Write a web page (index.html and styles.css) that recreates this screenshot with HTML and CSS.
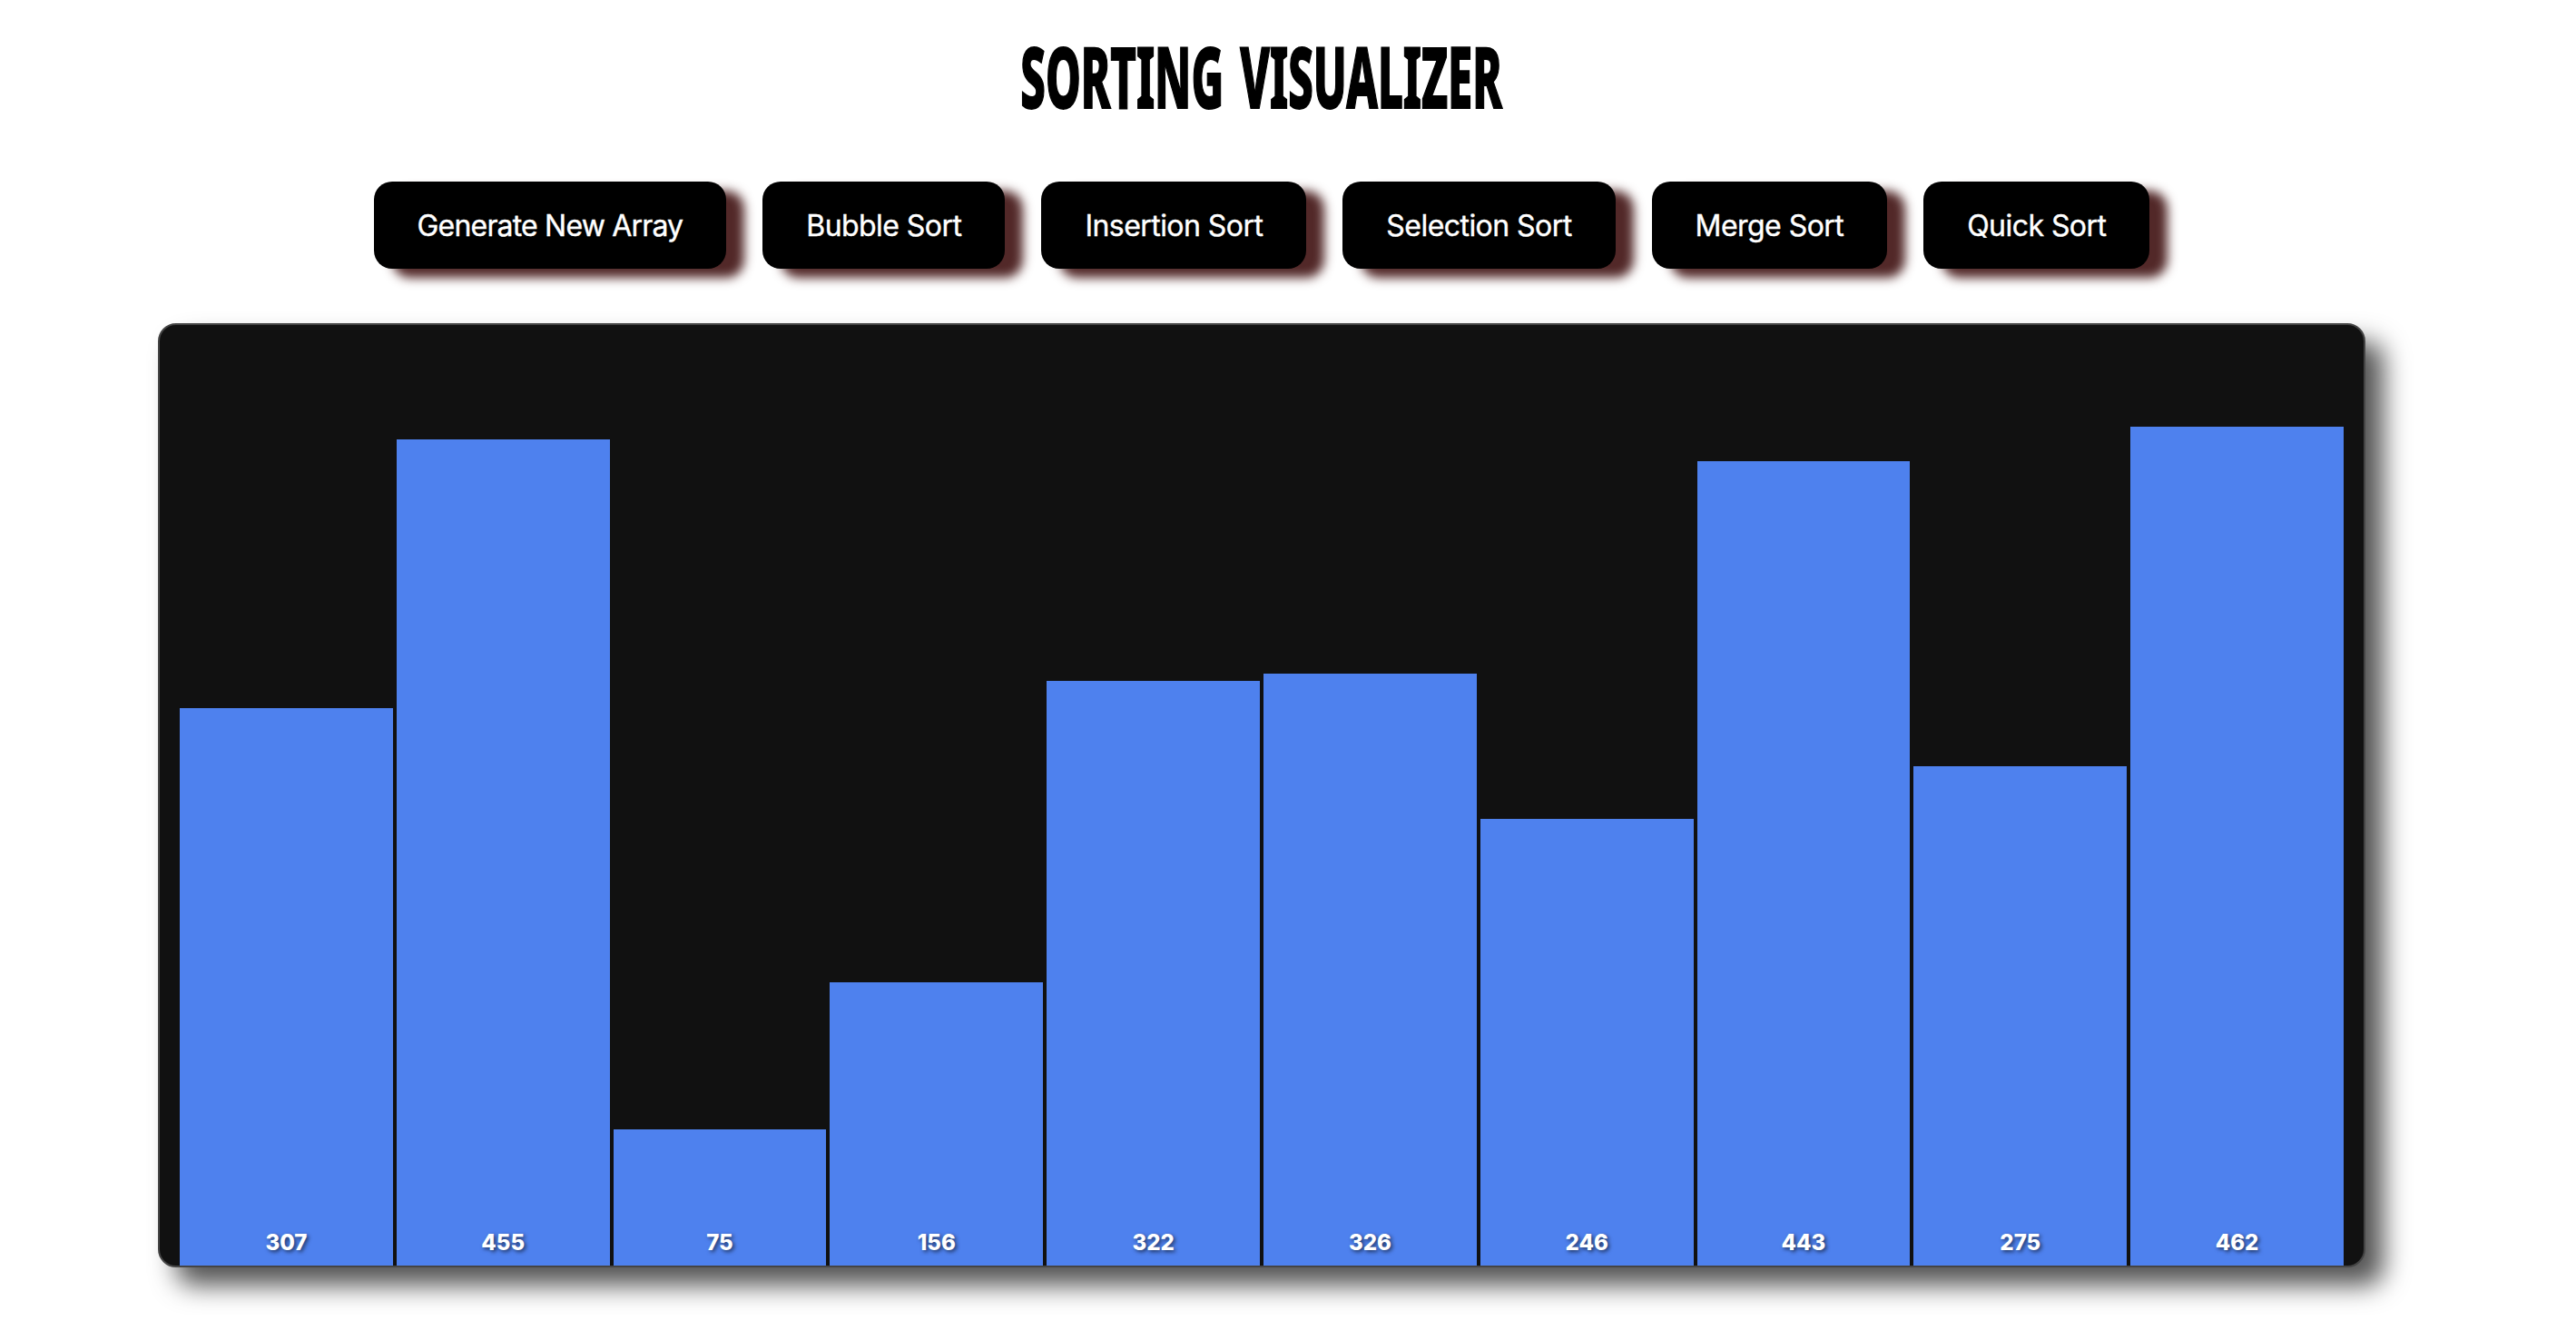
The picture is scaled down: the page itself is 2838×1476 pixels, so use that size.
FILE: index.html
```html
<!DOCTYPE html>
<html lang="en">
<head>
    <meta charset="UTF-8">
    <meta name="viewport" content="width=device-width, initial-scale=1.0">
    <title>Sorting Visualizer</title>
    <link rel="stylesheet" href="styles.css">
</head>
<body>
    <h1 class="title"><span class="title-text">SORTING VISUALIZER</span></h1>

    <div class="controls">
        <button class="btn btn-generate" id="generate">Generate New Array</button>
        <button class="btn" id="bubble">Bubble Sort</button>
        <button class="btn" id="insertion">Insertion Sort</button>
        <button class="btn" id="selection">Selection Sort</button>
        <button class="btn" id="merge">Merge Sort</button>
        <button class="btn" id="quick">Quick Sort</button>
    </div>

    <div class="array-container" id="array">
        <div class="bar" style="height: 614px;"><span class="bar-value">307</span></div>
        <div class="bar" style="height: 910px;"><span class="bar-value">455</span></div>
        <div class="bar" style="height: 150px;"><span class="bar-value">75</span></div>
        <div class="bar" style="height: 312px;"><span class="bar-value">156</span></div>
        <div class="bar" style="height: 644px;"><span class="bar-value">322</span></div>
        <div class="bar" style="height: 652px;"><span class="bar-value">326</span></div>
        <div class="bar" style="height: 492px;"><span class="bar-value">246</span></div>
        <div class="bar" style="height: 886px;"><span class="bar-value">443</span></div>
        <div class="bar" style="height: 550px;"><span class="bar-value">275</span></div>
        <div class="bar" style="height: 924px;"><span class="bar-value">462</span></div>
    </div>
</body>
</html>
```

FILE: styles.css
```css
* {
    box-sizing: border-box;
}
body {
    margin: 0;
    padding: 40px 0 0;
    display: flex;
    flex-direction: column;
    align-items: center;
    width: 2780px;
    min-height: 1476px;
    background-color: #fff;
    font-family: Inter, sans-serif;
}
.title {
    margin: 0 0 60px;
    height: 100px;
    line-height: 88px;
    font-family: "Noto Sans", sans-serif;
    font-size: 92px;
    font-weight: 800;
    word-spacing: 10px;
    white-space: nowrap;
    -webkit-text-stroke: 2px #000;
}
.title-text {
    display: inline-block;
    transform: scaleX(0.532);
}
.controls {
    display: flex;
    gap: 40px;
    margin-bottom: 60px;
}
.btn {
    height: 96px;
    padding: 0 48px;
    border: none;
    border-radius: 20px;
    background-color: #000;
    color: #fff;
    font-family: Inter, sans-serif;
    font-size: 32px;
    letter-spacing: -0.55px;
    white-space: nowrap;
    cursor: pointer;
    -webkit-text-stroke: 0.4px #fff;
    box-shadow: 20px 10px 12px #522828;
}
.btn-generate {
    letter-spacing: -0.82px;
}
.array-container {
    display: flex;
    align-items: flex-end;
    gap: 4px;
    width: 2432px;
    height: 1040px;
    padding: 0 22px;
    border: 2px solid #444;
    border-radius: 20px;
    background-color: #111;
    box-shadow: 20px 20px 28px #555;
}
.bar {
    flex: 1;
    display: flex;
    align-items: flex-end;
    justify-content: center;
    padding-bottom: 10px;
    background-color: #4e81ee;
}
.bar-value {
    color: #fff;
    font-size: 24px;
    font-weight: 800;
    line-height: 30px;
    text-shadow: 2px 2px 4px rgba(0, 0, 0, 0.6);
}
```
